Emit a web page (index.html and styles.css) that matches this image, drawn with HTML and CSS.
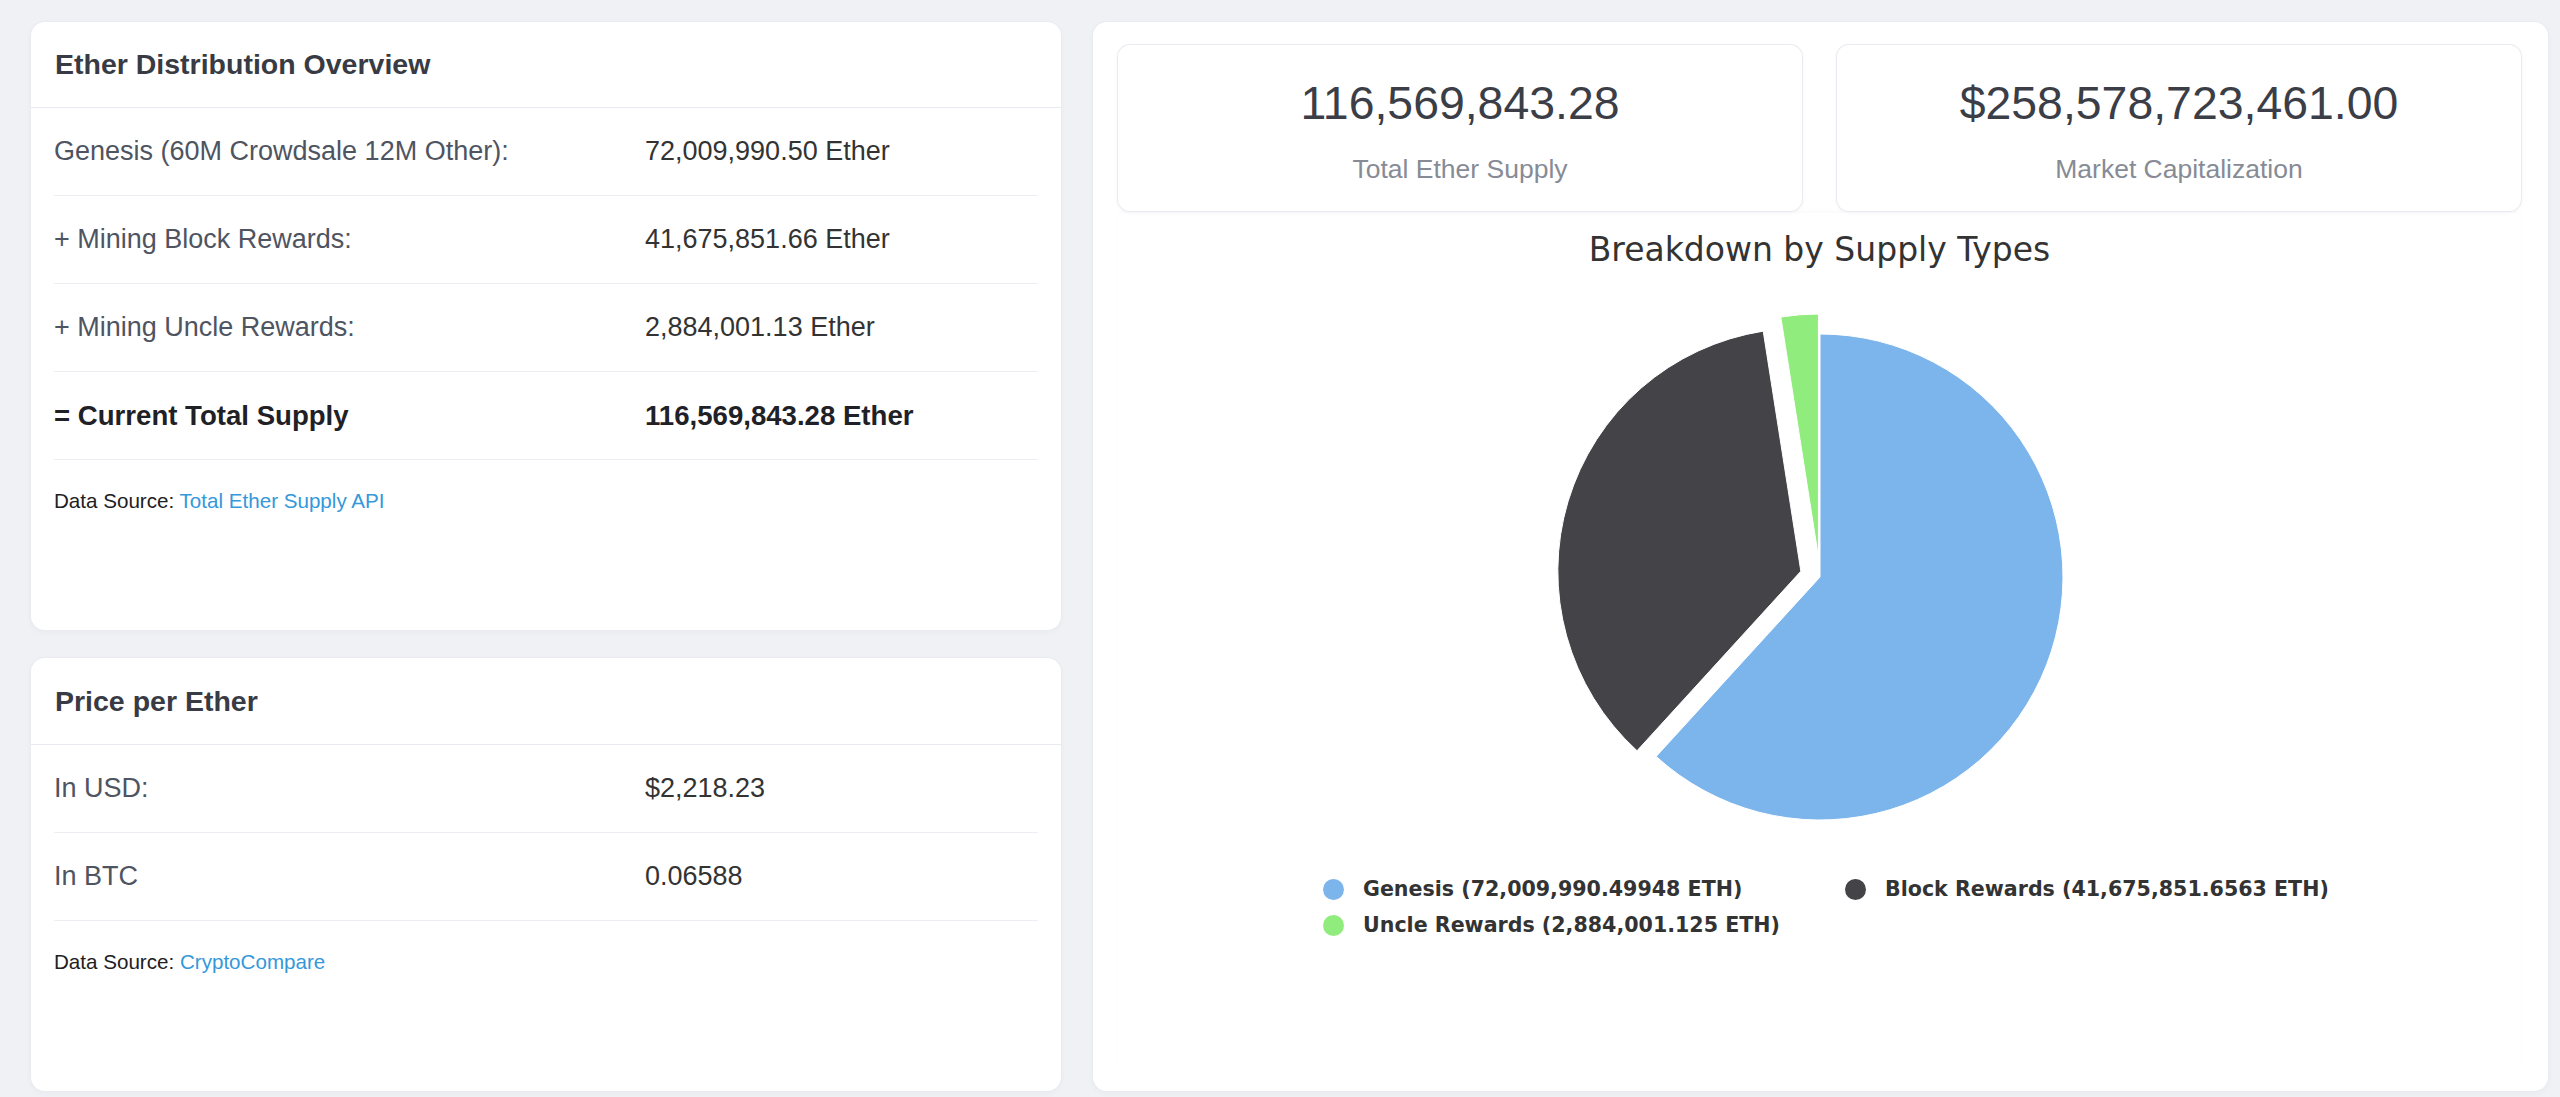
FILE: index.html
```html
<!DOCTYPE html>
<html lang="en">
<head>
<meta charset="utf-8">
<title>Ether Total Supply</title>
<link rel="stylesheet" href="styles.css">
</head>
<body>
<main class="page">
  <div class="left-col">
    <section class="card card-supply">
      <header class="card-header"><h2>Ether Distribution Overview</h2></header>
      <div class="card-body">
        <div class="row"><div class="label">Genesis (60M Crowdsale 12M Other):</div><div class="value">72,009,990.50 Ether</div></div>
        <div class="row"><div class="label">+ Mining Block Rewards:</div><div class="value">41,675,851.66 Ether</div></div>
        <div class="row"><div class="label">+ Mining Uncle Rewards:</div><div class="value">2,884,001.13 Ether</div></div>
        <div class="row row-total"><div class="label">= Current Total Supply</div><div class="value">116,569,843.28 Ether</div></div>
        <p class="source">Data Source: <a href="#">Total Ether Supply API</a></p>
      </div>
    </section>
    <section class="card card-price">
      <header class="card-header"><h2>Price per Ether</h2></header>
      <div class="card-body">
        <div class="row"><div class="label">In USD:</div><div class="value">$2,218.23</div></div>
        <div class="row"><div class="label">In BTC</div><div class="value">0.06588</div></div>
        <p class="source">Data Source: <a href="#">CryptoCompare</a></p>
      </div>
    </section>
  </div>

  <section class="card card-chart">
    <div class="stats">
      <div class="stat">
        <div class="stat-value">116,569,843.28</div>
        <div class="stat-label">Total Ether Supply</div>
      </div>
      <div class="stat">
        <div class="stat-value">$258,578,723,461.00</div>
        <div class="stat-label">Market Capitalization</div>
      </div>
    </div>
    <div class="chart">
      <h3 class="chart-title">Breakdown by Supply Types</h3>
      <svg class="pie" width="600" height="570" viewBox="0 0 600 570" aria-hidden="true">
        <path d="M 300 307 L 300 64 A 243 243 0 1 1 136.17 486.48 Z" fill="#7cb5ec" stroke="#ffffff" stroke-width="1" stroke-linejoin="round"/>
        <path d="M 280.85 301.24 L 117.02 480.72 A 243 243 0 0 1 243.22 61.17 Z" fill="#434348" stroke="#ffffff" stroke-width="1" stroke-linejoin="round"/>
        <path d="M 298.45 287.06 L 260.82 46.99 A 243 243 0 0 1 298.45 44.06 Z" fill="#90ed7d" stroke="#ffffff" stroke-width="1" stroke-linejoin="round"/>
      </svg>
      <ul class="legend">
        <li><span class="dot dot-genesis"></span>Genesis (72,009,990.49948 ETH)</li>
        <li><span class="dot dot-block"></span>Block Rewards (41,675,851.6563 ETH)</li>
        <li><span class="dot dot-uncle"></span>Uncle Rewards (2,884,001.125 ETH)</li>
      </ul>
    </div>
  </section>
</main>
</body>
</html>
```

FILE: styles.css
```css
* { box-sizing: border-box; }

html, body {
  margin: 0;
  background: #f0f1f5;
}

body {
  padding: 22px 12px 6px 31px;
  font-family: "Liberation Sans", Arial, sans-serif;
  color: #333333;
}

.page {
  display: grid;
  grid-template-columns: 1030px 1455px;
  column-gap: 32px;
  height: 1069px;
}

.left-col {
  display: flex;
  flex-direction: column;
  gap: 28px;
}

.card {
  background: #ffffff;
  border-radius: 14px;
  box-shadow: 0 0 0 1px #e9ebf1, 0 2px 6px rgba(30, 40, 80, 0.04);
}

.card-supply { height: 608px; }
.card-price { flex: 1; }

.card-header {
  display: flex;
  align-items: center;
  padding: 0 24px;
  border-bottom: 1px solid #e8eaf1;
}

.card-supply .card-header { height: 86px; }
.card-price .card-header { height: 87px; }

.card-header h2 {
  margin: 0;
  font-size: 28.5px;
  font-weight: 700;
  color: #383b44;
}

.card-body {
  padding: 0 23px;
}

.row {
  display: grid;
  grid-template-columns: 591px 1fr;
  align-items: center;
  height: 88px;
  border-bottom: 1px solid #eceef3;
  font-size: 27px;
}

.label { color: #4f5461; }
.value { color: #333333; }

.row-total .label,
.row-total .value {
  font-size: 27.6px;
  font-weight: 700;
  color: #1f2126;
}

.source {
  margin: 0;
  padding-top: 29px;
  font-size: 20.6px;
  line-height: 24px;
  color: #1e2022;
}

.source a {
  color: #3498db;
  text-decoration: none;
}

/* Right card */
.card-chart {
  padding: 23px 27px 0 25px;
}

.stats {
  display: flex;
  gap: 35px;
}

.stat {
  flex: 1;
  height: 166px;
  padding-top: 32px;
  text-align: center;
  background: #ffffff;
  border-radius: 12px;
  box-shadow: 0 0 0 1px #e9ebf1, 0 1px 5px rgba(30, 40, 80, 0.05);
}

.stat-value {
  font-size: 46.4px;
  line-height: 52px;
  color: #3b3e47;
}

.stat-label {
  margin-top: 24px;
  font-size: 26.5px;
  line-height: 32px;
  color: #868b96;
}

.chart {
  margin-top: 2px;
  padding-top: 17px;
  height: 856px;
  display: flex;
  flex-direction: column;
  align-items: center;
  border-radius: 6px;
  box-shadow: 0 -2px 4px rgba(30, 40, 80, 0.025);
}

.chart-title {
  margin: 0;
  font-family: "DejaVu Sans", "Liberation Sans", sans-serif;
  font-size: 33px;
  font-weight: 400;
  line-height: 40px;
  color: #333333;
}

.pie {
  display: block;
}

.legend {
  list-style: none;
  margin: 31px 0 0 8px;
  padding: 0;
  display: grid;
  grid-template-columns: 522px 479px;
  grid-auto-rows: 36px;
  font-family: "DejaVu Sans", "Liberation Sans", sans-serif;
  font-size: 20.6px;
  font-weight: 700;
  color: #333333;
}

.legend li {
  display: flex;
  align-items: center;
  gap: 19px;
  white-space: nowrap;
}

.dot {
  width: 21px;
  height: 21px;
  border-radius: 50%;
  flex: none;
}

.dot-genesis { background: #7cb5ec; }
.dot-block { background: #434348; }
.dot-uncle { background: #90ed7d; }
```
